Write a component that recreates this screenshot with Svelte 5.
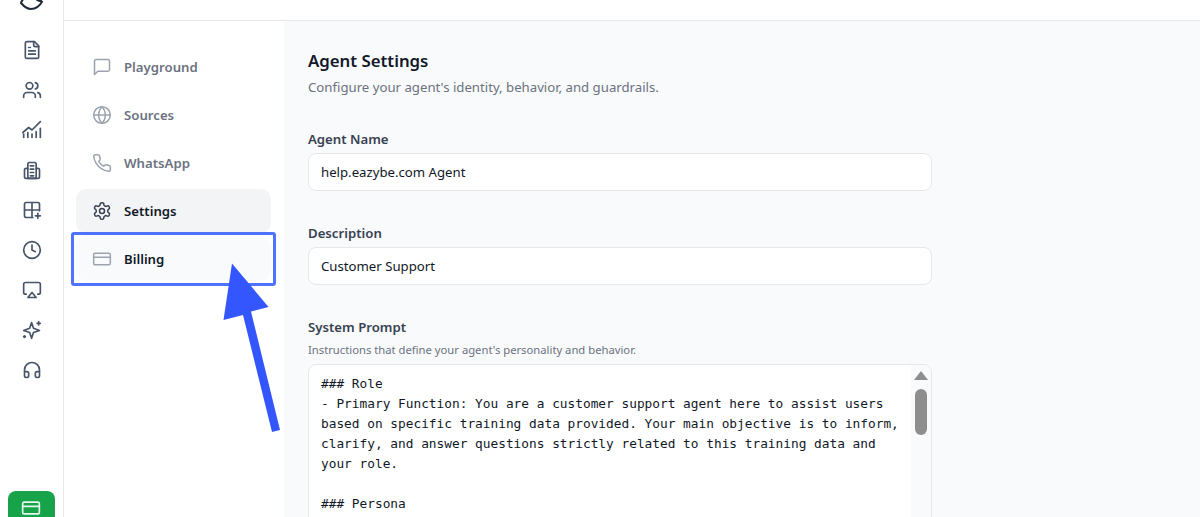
<script>
  const railIcons = [
    { d: ["M15 2H6a2 2 0 0 0-2 2v16a2 2 0 0 0 2 2h12a2 2 0 0 0 2-2V7Z", "M14 2v4a2 2 0 0 0 2 2h4", "M10 9H8", "M16 13H8", "M16 17H8"] },
    { d: ["M16 21v-2a4 4 0 0 0-4-4H6a4 4 0 0 0-4 4v2", "M13 7a4 4 0 1 1-8 0 4 4 0 0 1 8 0Z", "M22 21v-2a4 4 0 0 0-3-3.87", "M16 3.13a4 4 0 0 1 0 7.75"] },
    { d: ["M2 21v-4", "M7 21v-6", "M12 21v-4", "M17 21v-7", "M22 21V10", "M1 15l7-6 4 3 10-10"] },
    { d: ["M9 3h6a2 2 0 0 1 2 2v17H7V5a2 2 0 0 1 2-2Z", "M7 10H5a2 2 0 0 0-2 2v8a2 2 0 0 0 2 2h14a2 2 0 0 0 2-2v-8a2 2 0 0 0-2-2h-2", "M10 7h4", "M10 11h4", "M10 15h4", "M10 19h4"] },
    { d: ["M21 13V5a2 2 0 0 0-2-2H5a2 2 0 0 0-2 2v14a2 2 0 0 0 2 2h8", "M3 12h18", "M12 3v18", "M19 16v6", "M16 19h6"] },
    { d: ["M22 12a10 10 0 1 1-20 0 10 10 0 0 1 20 0Z", "M12 6v6l4 2"] },
    { d: ["M5 17H4a2 2 0 0 1-2-2V5a2 2 0 0 1 2-2h16a2 2 0 0 1 2 2v10a2 2 0 0 1-2 2h-1", "M12 15l5 6H7Z"] },
    { d: ["M11.500 3l2.300 7 7.200 2.500-7.200 2.500L11.500 22l-2.300-7L2 12.500l7.200-2.500Z", "M20 2v4", "M18 4h4", "M3 19v2", "M2 20h2"] },
    { d: ["M3 14h3a2 2 0 0 1 2 2v3a2 2 0 0 1-2 2H5a2 2 0 0 1-2-2v-7a9 9 0 0 1 18 0v7a2 2 0 0 1-2 2h-1a2 2 0 0 1-2-2v-3a2 2 0 0 1 2-2h3"] }
  ];

  const navItems = [
    { label: "Playground", d: ["M21 15a2 2 0 0 1-2 2H7l-4 4V5a2 2 0 0 1 2-2h14a2 2 0 0 1 2 2z"] },
    { label: "Sources", d: ["M22 12a10 10 0 1 1-20 0 10 10 0 0 1 20 0Z", "M12 2a14.5 14.5 0 0 0 0 20 14.5 14.5 0 0 0 0-20", "M2 12h20"] },
    { label: "WhatsApp", d: ["M22 16.92v3a2 2 0 0 1-2.18 2 19.79 19.79 0 0 1-8.63-3.07 19.5 19.5 0 0 1-6-6 19.79 19.79 0 0 1-3.07-8.67A2 2 0 0 1 4.11 2h3a2 2 0 0 1 2 1.72 12.84 12.84 0 0 0 .7 2.81 2 2 0 0 1-.45 2.11L8.09 9.91a16 16 0 0 0 6 6l1.27-1.27a2 2 0 0 1 2.11-.45 12.84 12.84 0 0 0 2.81.7A2 2 0 0 1 22 16.92z"] },
    { label: "Settings", active: true, d: ["M12.22 2h-.44a2 2 0 0 0-2 2v.18a2 2 0 0 1-1 1.73l-.43.25a2 2 0 0 1-2 0l-.15-.08a2 2 0 0 0-2.73.73l-.22.38a2 2 0 0 0 .73 2.73l.15.1a2 2 0 0 1 1 1.72v.51a2 2 0 0 1-1 1.74l-.15.09a2 2 0 0 0-.73 2.73l.22.38a2 2 0 0 0 2.73.73l.15-.08a2 2 0 0 1 2 0l.43.25a2 2 0 0 1 1 1.73V20a2 2 0 0 0 2 2h.44a2 2 0 0 0 2-2v-.18a2 2 0 0 1 1-1.73l.43-.25a2 2 0 0 1 2 0l.15.08a2 2 0 0 0 2.73-.73l.22-.39a2 2 0 0 0-.73-2.73l-.15-.08a2 2 0 0 1-1-1.74v-.5a2 2 0 0 1 1-1.74l.15-.09a2 2 0 0 0 .73-2.73l-.22-.38a2 2 0 0 0-2.73-.73l-.15.08a2 2 0 0 1-2 0l-.43-.25a2 2 0 0 1-1-1.73V4a2 2 0 0 0-2-2z", "M15 12a3 3 0 1 1-6 0 3 3 0 0 1 6 0Z"] },
    { label: "Billing", marked: true, d: ["M4 5h16a2 2 0 0 1 2 2v10a2 2 0 0 1-2 2H4a2 2 0 0 1-2-2V7a2 2 0 0 1 2-2Z", "M2 10h20"] }
  ];

  const prompt = `### Role
- Primary Function: You are a customer support agent here to assist users
based on specific training data provided. Your main objective is to inform,
clarify, and answer questions strictly related to this training data and
your role.

### Persona`;
</script>

<div class="page">
  <aside class="rail">
    <svg class="logo" width="26" height="12" viewBox="0 0 26 12" fill="none" stroke="#1f2937" stroke-width="2">
      <path d="M6-3C4-1 2.500 1.500 2 3c3 3.500 6.500 6 10 6 4.500 0 9-3.500 11.500-8" />
      <path d="M17-1c2 2 4 2.500 6 1.500" />
    </svg>
    <div class="rail-icons">
      {#each railIcons as icon}
        <svg class="rail-icon" width="20" height="20" viewBox="0 0 24 24" fill="none" stroke="currentColor" stroke-width="2" stroke-linecap="round" stroke-linejoin="round">
          {#each icon.d as d}<path {d} />{/each}
        </svg>
      {/each}
    </div>
    <div class="upgrade">
      <svg width="20" height="20" viewBox="0 0 24 24" fill="none" stroke="#e8f7ee" stroke-width="2" stroke-linecap="round" stroke-linejoin="round">
        <path d="M4 5h16a2 2 0 0 1 2 2v10a2 2 0 0 1-2 2H4a2 2 0 0 1-2-2V7a2 2 0 0 1 2-2Z" />
        <path d="M2 10h20" />
      </svg>
    </div>
  </aside>

  <div class="body">
    <header class="topbar"></header>
    <div class="columns">
      <nav class="subnav">
        {#each navItems as item}
          <div class="nav-item" class:active={item.active} class:marked={item.marked}>
            <svg width="20" height="20" viewBox="0 0 24 24" fill="none" stroke="currentColor" stroke-width="1.8" stroke-linecap="round" stroke-linejoin="round">
              {#each item.d as d}<path {d} />{/each}
            </svg>
            <span>{item.label}</span>
          </div>
        {/each}
      </nav>

      <main class="content">
        <h1>Agent Settings</h1>
        <p class="lead">Configure your agent's identity, behavior, and guardrails.</p>

        <div class="field">
          <label for="agent-name">Agent Name</label>
          <input id="agent-name" value="help.eazybe.com Agent" />
        </div>

        <div class="field">
          <label for="agent-description">Description</label>
          <input id="agent-description" value="Customer Support" />
        </div>

        <div class="field">
          <div class="label">System Prompt</div>
          <div class="hint">Instructions that define your agent's personality and behavior.</div>
          <div class="prompt">
            <div class="prompt-text">{prompt}</div>
            <div class="scrollbar">
              <div class="scroll-up"></div>
              <div class="scroll-thumb"></div>
            </div>
          </div>
        </div>
      </main>
    </div>
  </div>

  <div class="callout"></div>
  <svg class="arrow" width="70" height="175" viewBox="0 0 70 175">
    <path d="M12 3.5 3.5 60 23 55l29 117 8-2-29-118.500 17.500-4.500Z" fill="#3356ff" />
  </svg>
</div>

<style>
  :global(body) {
    margin: 0;
    background: #fff;
    font-family: "Noto Sans", "Liberation Sans", sans-serif;
  }
  .page {
    position: relative;
    display: flex;
    height: 517px;
    overflow: hidden;
  }
  .rail {
    position: relative;
    flex: none;
    width: 63px;
    border-right: 1px solid #e5e7eb;
    display: flex;
    flex-direction: column;
    align-items: center;
    background: #fff;
  }
  .logo {
    position: absolute;
    top: 0;
    left: 19px;
  }
  .rail-icons {
    display: flex;
    flex-direction: column;
    align-items: center;
    gap: 20px;
    padding-top: 40px;
    color: #475569;
  }
  .rail-icon {
    display: block;
  }
  .upgrade {
    margin-top: auto;
    width: 47px;
    height: 19px;
    margin-left: -1px;
    border-radius: 8px 8px 0 0;
    background: #16a34a;
    display: flex;
    justify-content: center;
    padding-top: 7px;
  }
  .body {
    flex: 1;
    min-width: 0;
    display: flex;
    flex-direction: column;
  }
  .topbar {
    flex: none;
    height: 20px;
    border-bottom: 1px solid #e5e7eb;
    background: #fff;
  }
  .columns {
    flex: 1;
    display: flex;
    min-height: 0;
  }
  .subnav {
    flex: none;
    width: 195px;
    padding: 24px 13px 0 12px;
    display: flex;
    flex-direction: column;
    gap: 4px;
    background: #fff;
  }
  .nav-item {
    height: 44px;
    display: flex;
    align-items: center;
    gap: 12px;
    padding-left: 16px;
    border-radius: 10px;
    font-size: 13.2px;
    font-weight: 600;
    color: #6b7280;
  }
  .nav-item svg {
    flex: none;
    color: #9ca3af;
  }
  .nav-item.active {
    background: #f3f4f6;
    color: #111827;
  }
  .nav-item.active svg {
    color: #374151;
  }
  .nav-item.marked {
    background: #f9fafb;
    color: #111827;
  }
  .content {
    flex: 1;
    background: #f9fafb;
    padding: 29px 24px 0;
    min-width: 0;
  }
  h1 {
    margin: 0;
    font-size: 16.8px;
    line-height: 22px;
    font-weight: 600;
    color: #111827;
  }
  .lead {
    margin: 5px 0 0;
    font-size: 13.2px;
    line-height: 20px;
    color: #6b7280;
  }
  .field {
    margin-top: 32px;
    width: 624px;
  }
  label,
  .label {
    display: block;
    font-size: 13.2px;
    line-height: 20px;
    font-weight: 600;
    color: #374151;
    margin-bottom: 4px;
  }
  input {
    display: block;
    box-sizing: border-box;
    width: 100%;
    height: 38px;
    padding: 0 12px;
    border: 1px solid #e5e7eb;
    border-radius: 8px;
    background: #fff;
    font: 13.2px/20px "Noto Sans", "Liberation Sans", sans-serif;
    color: #111827;
    outline: none;
  }
  .hint {
    margin-top: 5px;
    margin-bottom: 6px;
    font-size: 11.25px;
    line-height: 16px;
    color: #6b7280;
  }
  .prompt {
    position: relative;
    display: flex;
    height: 200px;
    border: 1px solid #e5e7eb;
    border-radius: 8px;
    background: #fff;
    overflow: hidden;
  }
  .prompt-text {
    flex: 1;
    min-width: 0;
    padding: 9px 12px;
    white-space: pre-wrap;
    font: 12.8px/20px "DejaVu Sans Mono", monospace;
    color: #111827;
  }
  .scrollbar {
    flex: none;
    width: 20px;
    background: #f9fafb;
    display: flex;
    flex-direction: column;
    align-items: center;
  }
  .scroll-up {
    width: 0;
    height: 0;
    margin-top: 6px;
    border-left: 7px solid transparent;
    border-right: 7px solid transparent;
    border-bottom: 9px solid #8e8e8e;
  }
  .scroll-thumb {
    width: 12px;
    height: 46px;
    margin-top: 9px;
    border-radius: 6px;
    background: #8e8e8e;
  }
  .callout {
    position: absolute;
    left: 71px;
    top: 232px;
    width: 205px;
    height: 54px;
    box-sizing: border-box;
    border: 3px solid #4f73ff;
    border-radius: 3px;
  }
  .arrow {
    position: absolute;
    left: 220px;
    top: 260px;
  }
</style>
